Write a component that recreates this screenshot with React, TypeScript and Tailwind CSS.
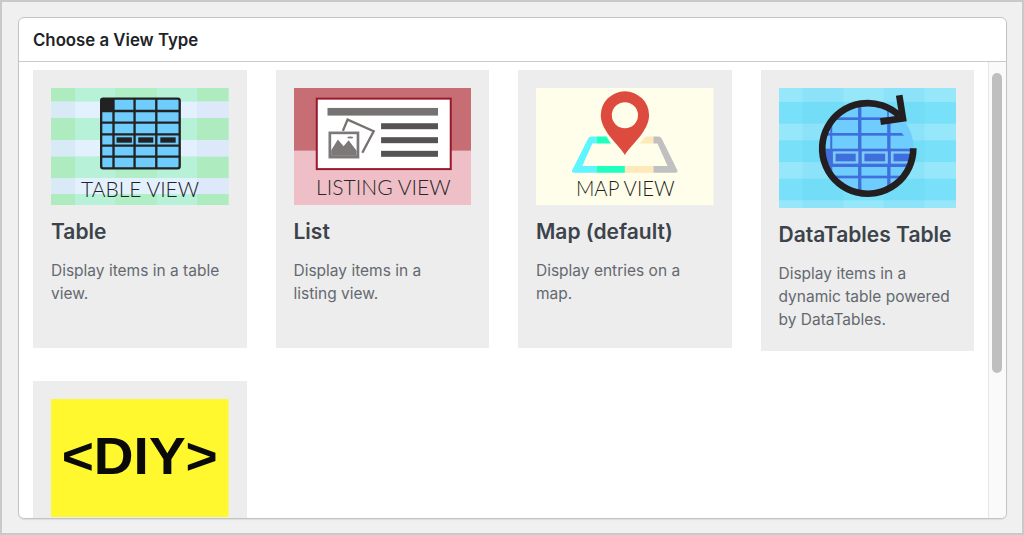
import React from "react";

const font = "[font-family:Inter,'Liberation_Sans',sans-serif]";

function TableThumb() {
  const cols = [340, 403, 468, 534];
  return (
    <svg viewBox="153 264 531 351" className="block h-full w-full" preserveAspectRatio="none">
      <rect x="153" y="264" width="531" height="351" fill="#b7f2d8" />
      {[[264, 41], [354, 66], [469, 65], [582, 33]].map(([y, h]) => (
        <g key={y}>
          <rect x="153" y={y} width="72" height={h} fill="#aeecc0" />
          <rect x="345" y={y} width="125" height={h} fill="#b0efc6" />
          <rect x="590" y={y} width="94" height={h} fill="#aeecc0" />
        </g>
      ))}
      {[[305, 49], [420, 49], [534, 48]].map(([y, h]) => (
        <g key={y}>
          <rect x="153" y={y} width="531" height={h} fill="#e3f0fd" />
          <rect x="153" y={y} width="72" height={h} fill="#d8eaf6" />
          <rect x="590" y={y} width="94" height={h} fill="#dde9fb" />
        </g>
      ))}
      <rect x="303" y="296" width="235" height="209" rx="6" fill="#6fcdfd" stroke="#222" strokeWidth="7" />
      <rect x="303" y="296" width="37" height="37" fill="#222" />
      {cols.slice(0, 3).map((x) => (
        <line key={x} x1={x} y1="295" x2={x} y2="505" stroke="#222" strokeWidth="7" />
      ))}
      {[333, 368, 403, 437, 470].map((y) => (
        <line key={y} x1="302" y1={y} x2="538" y2={y} stroke="#222" strokeWidth="7" />
      ))}
      {[[349, 46], [414, 45], [480, 46]].map(([x, w]) => (
        <rect key={x} x={x} y="412" width={w} height="16" fill="#222" />
      ))}
      <text x="243" y="590" fontFamily="Lato, sans-serif" fontWeight="300" fontSize="62" fill="#222" textLength="353" lengthAdjust="spacingAndGlyphs">TABLE VIEW</text>
    </svg>
  );
}

function ListThumb() {
  return (
    <svg viewBox="72 83 530 352" className="block h-full w-full" preserveAspectRatio="none">
      <rect x="72" y="83" width="530" height="189" fill="#c76d74" />
      <rect x="72" y="272" width="530" height="163" fill="#eebfc6" />
      <rect x="140" y="115" width="400" height="212" fill="#fff" stroke="#98192b" strokeWidth="6" />
      <rect x="172" y="143" width="330" height="23" fill="#777272" />
      {[189, 231, 272].map((y) => (
        <rect key={y} x="332" y={y} width="170" height="18" fill="#555353" />
      ))}
      <path d="M218 212 L232 178 L310 213 L276 278" fill="none" stroke="#777272" strokeWidth="7" />
      <rect x="175" y="214" width="92" height="81" fill="#7d7878" />
      <rect x="183" y="222" width="76" height="63" fill="#fff" />
      <path d="M183 285 V270 L203 238 L220 258 L235 240 L259 272 V285 Z" fill="#7d7878" />
      <ellipse cx="240" cy="232" rx="9" ry="3" fill="#7d7878" />
      <text x="138" y="405" fontFamily="Lato, sans-serif" fontWeight="300" fontSize="66" fill="#2a2527" textLength="402" lengthAdjust="spacingAndGlyphs">LISTING VIEW</text>
    </svg>
  );
}

function MapThumb() {
  return (
    <svg viewBox="80 83 529 352" className="block h-full w-full" preserveAspectRatio="none">
      <rect x="80" y="83" width="529" height="352" fill="#fffeea" />
      <path d="M187 332 Q186 338 194 338 H260 V318 H218 L248 250 H260 V229 H246 Q238 229 235 236 Z" fill="#5ff4ff" />
      <path d="M260 229 H290 L303 250 H260 Z M260 318 H345 V338 H260 Z" fill="#1effc0" />
      <path d="M345 318 H430 V338 H345 Z M388 250 L408 229 H430 V250 Z" fill="#ffe9b8" />
      <path d="M430 229 H445 Q452 229 455 236 L502 332 Q503 338 496 338 H430 V318 H472 L442 250 H430 Z" fill="#c0c0c0" />
      <path d="M345 285 C335 262 273 215 273 165 A72 72 0 0 1 417 165 C417 215 355 262 345 285 Z" fill="#dd4b3e" />
      <circle cx="345" cy="165" r="39" fill="#fffeea" />
      <text x="199" y="409" fontFamily="Lato, sans-serif" fontWeight="300" fontSize="62" fill="#1f1f1f" textLength="294" lengthAdjust="spacingAndGlyphs">MAP VIEW</text>
    </svg>
  );
}

function DataTablesThumb() {
  return (
    <svg viewBox="87 83 530 360" className="block h-full w-full" preserveAspectRatio="none">
      <defs>
        <clipPath id="dtCircle">
          <circle cx="353" cy="264" r="136" />
        </clipPath>
        <clipPath id="dtGrid">
          <path d="M210 120 H415 V170 L490 264 L470 410 H210 Z" />
        </clipPath>
      </defs>
      <rect x="87" y="83" width="530" height="360" fill="#78e0f8" />
      {[[83, 42], [190, 50], [305, 50], [420, 23]].map(([y, h]) => (
        <rect key={y} x="87" y={y} width="530" height={h} fill="#97e7fb" />
      ))}
      <rect x="157" y="83" width="122" height="360" fill="#5fd4f6" opacity=".18" />
      <rect x="400" y="83" width="122" height="360" fill="#5fd4f6" opacity=".18" />
      <g clipPath="url(#dtCircle)">
        <rect x="210" y="120" width="290" height="290" fill="#6fcdfd" />
        <g clipPath="url(#dtGrid)">
          {[328, 415].map((x) => (
            <rect key={x} x={x - 5} y="120" width="10" height="290" fill="#3f6fdc" />
          ))}
          <rect x="240" y="120" width="6" height="290" fill="#3f6fdc" />
          {[175, 222, 350].map((y) => (
            <rect key={y} x="210" y={y - 4} width="290" height="8" fill="#3f6fdc" />
          ))}
          <rect x="210" y="265" width="290" height="55" fill="#3f6fdc" />
          {[[248, 76], [334, 78], [421, 80]].map(([x, w]) => (
            <g key={x}>
              <rect x={x} y="273" width={w} height="37" fill="#7ec8f8" />
              <rect x={x + 8} y="280" width={w - 16} height="23" fill="#3f6fdc" />
            </g>
          ))}
        </g>
      </g>
      <path d="M488 264 A136 136 0 1 1 445 165" fill="none" stroke="#231f20" strokeWidth="20" />
      <path d="M446 105 L457 174 L390 184" fill="none" stroke="#231f20" strokeWidth="20" />
    </svg>
  );
}

function DiyThumb() {
  return (
    <svg viewBox="154 90 530 354" className="block h-full w-full" preserveAspectRatio="none">
      <rect x="154" y="90" width="530" height="354" fill="#fff82e" />
      <text x="186" y="315" fontFamily="'Liberation Sans', sans-serif" fontWeight="700" fontSize="156" fill="#0a0a0a" textLength="466" lengthAdjust="spacingAndGlyphs">&lt;DIY&gt;</text>
    </svg>
  );
}

function Card({ thumb, h, title, desc }: { thumb: React.ReactNode; h: string; title?: string; desc?: React.ReactNode }) {
  return (
    <div className="min-h-[278px] bg-[#ededed] px-[18px] pt-[18px] pb-[20px]">
      <div className={`w-full ${h}`}>{thumb}</div>
      {title && (
        <>
          <h3 className="mt-[14px] text-[21px] leading-[26px] font-semibold text-[#3c434a]">{title}</h3>
          <p className="mt-[14px] max-w-[173px] text-[15.5px] leading-[23px] text-[#646970]">{desc}</p>
        </>
      )}
    </div>
  );
}

export default function App() {
  return (
    <div className={`${font} box-border h-[535px] w-[1024px] overflow-hidden border-2 border-[#c8c9cb] bg-[#f0f0f1] pt-[15px] pr-[15px] pl-[16px]`}>
      <div className="flex h-[502px] flex-col overflow-hidden rounded-md border border-[#c3c4c7] bg-white shadow-[0_1px_1px_rgba(0,0,0,0.08)]">
        <div className="flex h-[44px] shrink-0 items-center border-b border-[#c9cacc] pt-[3px] pl-[14px]">
          <h2 className="text-[16.8px] font-semibold text-[#1d2327]">Choose a View Type</h2>
        </div>
        <div className="flex min-h-0 flex-1">
          <div className="min-w-0 flex-1 overflow-hidden pt-[8px] pl-[14px]">
            <div className="grid grid-cols-[213.5px_213.5px_213.5px_213.5px] items-start gap-x-[29px] gap-y-[30px]">
              <Card h="h-[117px]" thumb={<TableThumb />} title="Table" desc="Display items in a table view." />
              <Card h="h-[117px]" thumb={<ListThumb />} title="List" desc="Display items in a listing view." />
              <Card h="h-[117px]" thumb={<MapThumb />} title="Map (default)" desc="Display entries on a map." />
              <Card h="h-[120px]" thumb={<DataTablesThumb />} title="DataTables Table" desc="Display items in a dynamic table powered by DataTables." />
              <Card h="h-[118px]" thumb={<DiyThumb />} />
            </div>
          </div>
          <div className="w-[18px] shrink-0 border-l border-[#e6e6e6] bg-[#fafafa] pt-[11px] pl-[3px]">
            <div className="h-[300px] w-[10px] rounded-full bg-[#bfbfbf]" />
          </div>
        </div>
      </div>
    </div>
  );
}
